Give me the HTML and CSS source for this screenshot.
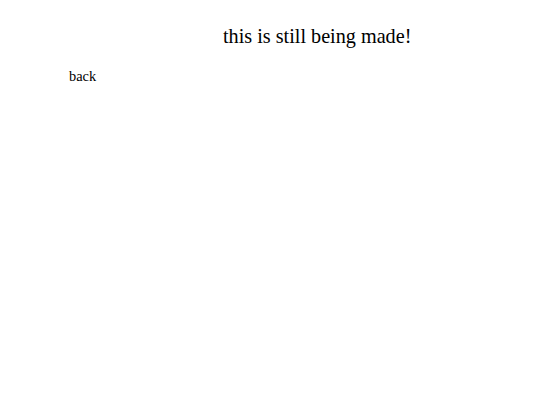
FILE: index.html
```html
<!DOCTYPE html>
<html>
<head>
<meta charset="utf-8">
<link rel="stylesheet" href="styles.css">
</head>
<body>
<div class="page">
  <h1 class="title">this is still being made!</h1>
  <a class="back" href="#">back</a>
</div>
</body>
</html>
```
FILE: styles.css
```css
html, body { margin: 0; padding: 0; background: #fff; }
.page {
  font-family: "Liberation Serif", "Times New Roman", serif;
  color: #000;
  padding: 24px 0 0 69px;
}
.title {
  margin: 0 0 0 154px;
  font-size: 20.2px;
  font-weight: normal;
  line-height: 24px;
}
.back {
  display: block;
  margin-top: 20px;
  font-size: 14.4px;
  line-height: 17px;
  color: #000;
  text-decoration: none;
}
```
